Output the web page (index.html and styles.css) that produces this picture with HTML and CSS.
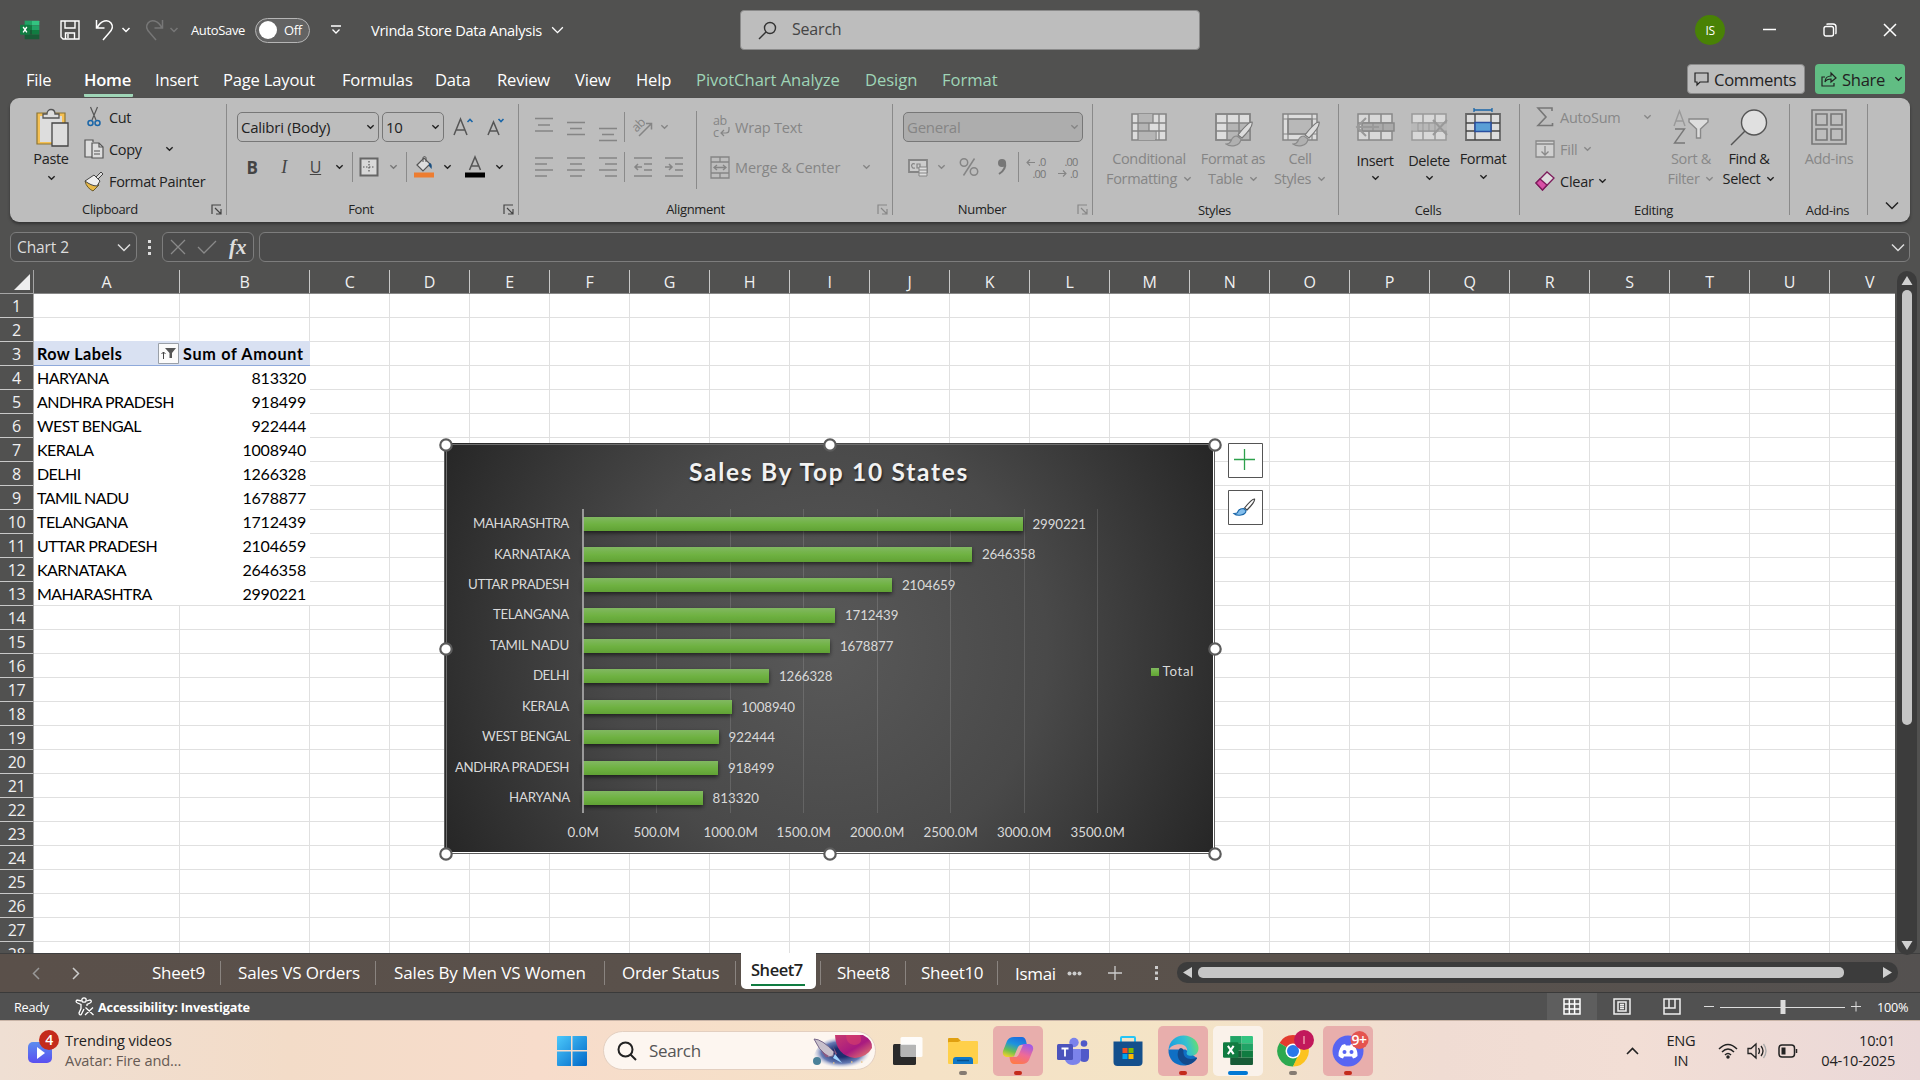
FILE: index.html
```html
<!DOCTYPE html>
<html lang="en">
<head>
<meta charset="utf-8">
<title>Vrinda Store Data Analysis</title>
<link rel="stylesheet" href="styles.css">
</head>
<body>
<svg class="defs" width="0" height="0" aria-hidden="true">
  <symbol id="chev" viewBox="0 0 10 6"><path d="M1.5 1l3.5 3.5L8.5 1" fill="none" stroke="currentColor" stroke-width="1.5"/></symbol>
  <symbol id="bigchev" viewBox="0 0 14 9"><path d="M1 1.5l6 6 6-6" fill="none" stroke="currentColor" stroke-width="1.5"/></symbol>
  <symbol id="launch" viewBox="0 0 11 11"><path d="M1 10V1h9M4 4l6 6M10 5v5H5" fill="none" stroke="currentColor" stroke-width="1.2"/></symbol>
  <symbol id="brush" viewBox="0 0 28 26"><path d="M27 1c-3 0-7 4-14 13l4 3C24 10 28 4 27 1z" fill="#ddd" stroke="#777" stroke-width="1.2"/><path d="M12 15c-3 0-5 2-6 5-1 2-3 3-5 3 4 3 14 3 15-5z" fill="#b0b0b0" stroke="#8a8a8a" stroke-width="1.2"/></symbol>
  <symbol id="excel" viewBox="0 0 30 30"><path d="M7 1h11v7H7z" fill="#21a366"/><path d="M18 1h10q1 0 1 1v6H18z" fill="#33c481"/><path d="M7 8h11v7H7z" fill="#107c41"/><path d="M18 8h11v7H18z" fill="#21a366"/><path d="M7 15h11v7H7z" fill="#185c37"/><path d="M18 15h11v7H18z" fill="#107c41"/><path d="M7 22h22v6q0 1-1 1H8q-1 0-1-1z" fill="#185c37"/><rect x="0" y="7" width="15" height="15" rx="1.2" fill="#107c41"/><path d="M4.700 10.500l5.600 8M10.300 10.500l-5.600 8" stroke="#fff" stroke-width="2"/></symbol>
</svg>

<header class="titlebar">
  <svg class="t-excel" width="20" height="20"><use href="#excel"/></svg>
  <svg width="20" height="20" viewBox="0 0 20 20" fill="none" stroke="#fff" stroke-width="1.4"><path d="M1 1h18v18H3l-2-2zM5 1v7h10V1M5.500 19v-6h9v6M8 14v4"/></svg>
  <svg width="20" height="22" viewBox="0 0 20 22" fill="none" stroke="#fff" stroke-width="1.5"><path d="M1.500 1v8h8M2 9C6 1 13 0 16 4s1 7-2 10l-6 7"/></svg>
  <svg class="chev w" width="10" height="6"><use href="#chev"/></svg>
  <svg width="20" height="22" viewBox="0 0 20 22" fill="none" stroke="#777" stroke-width="1.500"><path d="M18.500 1v8h-8M18 9C14 1 7 0 4 4s-1 7 2 10l6 7"/></svg>
  <svg class="chev g" width="10" height="6"><use href="#chev"/></svg>
  <span class="autosave">AutoSave</span>
  <span class="toggle"><i></i>Off</span>
  <svg width="10" height="10" viewBox="0 0 10 10" fill="none" stroke="#fff" stroke-width="1.300"><path d="M0 1h10M1.500 4.500L5 8l3.500-3.500"/></svg>
  <span class="doc">Vrinda Store Data Analysis</span>
  <svg class="w" width="13" height="8"><use href="#bigchev"/></svg>
  <div class="search"><svg width="19" height="19" viewBox="0 0 19 19" fill="none" stroke="#333" stroke-width="1.400"><circle cx="12" cy="7" r="5.500"/><path d="M8 11l-7 7"/></svg><span>Search</span></div>
  <div class="win">
    <span class="avatar">IS</span>
    <svg width="14" height="14" viewBox="0 0 14 14"><path d="M0 6.500h13" stroke="#fff" stroke-width="1.500"/></svg>
    <svg width="14" height="14" viewBox="0 0 14 14" fill="none" stroke="#fff" stroke-width="1.400"><rect x="1" y="3.500" width="9.500" height="9.500" rx="2"/><path d="M3.500 1.500Q4 1 5 1h5q3 0 3 3v5.500q0 1-.5 1.500"/></svg>
    <svg width="14" height="14" viewBox="0 0 14 14"><path d="M1 1l12 12M13 1L1 13" stroke="#fff" stroke-width="1.500"/></svg>
  </div>
</header>

<nav class="tabs">
  <span>File</span><span class="on"><b>Home</b></span><span>Insert</span><span>Page Layout</span><span>Formulas</span><span>Data</span><span>Review</span><span>View</span><span>Help</span><span class="ctx">PivotChart Analyze</span><span class="ctx">Design</span><span class="ctx">Format</span>
  <div class="btn comments"><svg width="15" height="14" viewBox="0 0 15 14" fill="none" stroke="#222" stroke-width="1.200"><path d="M1 1h13v9H6l-3 3v-3H1z"/></svg>Comments</div>
  <div class="btn share"><svg width="16" height="15" viewBox="0 0 16 15" fill="none" stroke="#222" stroke-width="1.200"><path d="M4 5H1v9h12v-3M4 10c0-4 3-6 6-6V1l5 5-5 4V7c-3 0-5 1-6 3z"/></svg>Share<svg class="k" width="9" height="6"><use href="#chev"/></svg></div>
</nav>

<section class="ribbon">
  <div class="grp clip">
    <div class="body">
      <div class="big paste"><svg width="36" height="40" viewBox="-2 0 36 40"><path d="M2 5h28v31H2z" fill="#f5c053" stroke="#8c7433" stroke-width="1.200"/><path d="M5 8h22v26H5z" fill="#ddd"/><path d="M8 10V6h4c0-6 8-6 8 0h4v4z" fill="#ddd" stroke="#555" stroke-width="1.300"/><path d="M17 15h16v23H17z" fill="#ddd" stroke="#444" stroke-width="1.300"/></svg><span>Paste</span><svg class="k" width="9" height="6"><use href="#chev"/></svg></div>
      <div class="list">
        <div class="row"><svg width="20" height="20" viewBox="0 0 20 20" fill="none" stroke="#555" stroke-width="1.200"><path d="M6.500 0L12 13M13.500 0L8 13"/><g stroke="#1a66a8" stroke-width="1.500"><circle cx="6.500" cy="16" r="2.500"/><circle cx="13.500" cy="16" r="2.500"/></g></svg><span>Cut</span></div>
        <div class="row"><svg width="20" height="20" viewBox="0 0 20 20" fill="#ddd" stroke="#555" stroke-width="1.200"><path d="M8 18H1V1h8v2"/><path d="M8 4h7l4 4v11H8z"/><path d="M15 4v4h4M10 12h6M10 15h6" fill="none"/></svg><span class="cp">Copy</span><svg class="k" width="9" height="6"><use href="#chev"/></svg></div>
        <div class="row"><svg width="20" height="19" viewBox="0 0 20 19"><path d="M1 9l6-2 8 6-6 6c-4-2-7-5-8-10z" fill="#e8b845" stroke="#6b5a2a"/><path d="M1 9l9-6 6 6-3 5c-4 0-8-2-12-5z" fill="#eee" stroke="#444"/><path d="M12 5l5-5 2 2-5 5z" fill="#ddd" stroke="#444"/></svg><span>Format Painter</span></div>
      </div>
    </div>
    <label>Clipboard</label><svg class="la" width="11" height="11"><use href="#launch"/></svg>
  </div>

  <div class="grp font">
    <div class="body col">
      <div class="r1"><div class="combo c1">Calibri (Body)<svg width="9" height="6"><use href="#chev"/></svg></div><div class="combo c2">10<svg width="9" height="6"><use href="#chev"/></svg></div>
        <svg class="m9" width="21" height="20" viewBox="0 0 21 20" fill="none"><path d="M1 18L7.500 2 14 18M3.500 13h8" stroke="#555" stroke-width="1.500"/><path d="M14.500 5L17 2.500l2.500 2.500" stroke="#1a66a8" stroke-width="1.600"/></svg>
        <svg class="m12" width="19" height="20" viewBox="0 0 19 20" fill="none"><path d="M1 18L6.500 5 12 18M3 14h7" stroke="#555" stroke-width="1.500"/><path d="M11.500 2l2.500 2.500L16.500 2" stroke="#1a66a8" stroke-width="1.600"/></svg></div>
      <div class="r2 fontrow"><b class="fb">B</b><i class="fi">I</i><u class="fu">U</u><svg class="k" width="9" height="6"><use href="#chev"/></svg><em></em>
        <svg width="20" height="20" viewBox="0 0 20 20"><path d="M1.500 1.500h17v17h-17z" fill="#d8d8d8" stroke="#666" stroke-width="2"/><path d="M10 4v12M4 10h12" stroke="#555" stroke-width="1.200" stroke-dasharray="1.500 1.500"/></svg>
        <svg class="gg" width="9" height="6"><use href="#chev"/></svg><em></em>
        <svg width="22" height="22" viewBox="0 0 22 22"><path d="M4 9l7-7 6 6-7 7z" fill="#ddd" stroke="#555" stroke-width="1.200"/><path d="M10 6V2c0-2 3-2 3 0v4" fill="none" stroke="#555"/><path d="M16 7c3 0 3 3 2.500 6L16 10z" fill="#1a4f80"/><path d="M1 16.500h20v5H1z" fill="#ed7d31"/></svg>
        <svg class="k" width="9" height="6"><use href="#chev"/></svg>
        <svg width="22" height="22" viewBox="0 0 22 22"><path d="M5.500 14L11 1l5.500 13M7.500 10h7" fill="none" stroke="#555" stroke-width="1.500"/><path d="M1 16.500h20v5H1z"/></svg>
        <svg class="k" width="9" height="6"><use href="#chev"/></svg></div>
    </div>
    <label>Font</label><svg class="la" width="11" height="11"><use href="#launch"/></svg>
  </div>

  <div class="grp align dis">
    <div class="body">
      <div class="aleft">
        <div class="arow"><svg width="18" height="20" viewBox="0 0 18 20"><path d="M0 1.500h18M3 8h12M0 14h18"/></svg><svg width="18" height="20" viewBox="0 0 18 20"><path d="M0 5.500h18M3 11.500h12M0 17.500h18"/></svg><svg width="18" height="20" viewBox="0 0 18 20"><path d="M0 11.500h18M3 17.500h12M0 23.500h18"/></svg><em></em>
          <svg width="22" height="22" viewBox="0 0 22 22"><g transform="rotate(-45 8 9)"><text x="0" y="12" class="ab">ab</text></g><path d="M7 20L19 8M14 7.500h5.500v6"/></svg><svg class="cv as0" width="9" height="6"><use href="#chev"/></svg></div>
        <div class="arow"><svg width="18" height="20" viewBox="0 0 18 20"><path d="M0 1h18M0 7h12M0 13h18M0 19h12"/></svg><svg width="18" height="20" viewBox="0 0 18 20"><path d="M0 1h18M3 7h12M0 13h18M3 19h12"/></svg><svg width="18" height="20" viewBox="0 0 18 20"><path d="M0 1h18M6 7h12M0 13h18M6 19h12"/></svg><em></em>
          <svg width="18" height="20" viewBox="0 0 18 20"><path d="M0 1h18M10 7h8M10 13h8M0 19h18M8 10H1M4 7l-3 3 3 3"/></svg><svg width="18" height="20" viewBox="0 0 18 20"><path d="M0 1h18M10 7h8M10 13h8M0 19h18M0 10h7M4 7l3 3-3 3"/></svg></div>
      </div>
      <div class="aright">
        <div class="row"><svg width="20" height="21" viewBox="0 0 20 21"><text class="ab"><tspan x="3" y="8">ab</tspan><tspan x="3" y="20">c</tspan></text><path d="M19 10v3q0 3-3 3h-5M14 13l-3 3 3 3" stroke-width="1.200"/></svg><span>Wrap Text</span></div>
        <div class="row"><svg width="20" height="21" viewBox="0 0 20 21"><path d="M1 0h18v21H1zM1 5h18M1 16h18M10 0v5M10 16v5M4 10.500h12M7 8l-3 2.500L7 13M13 8l3 2.500-3 2.500" stroke-width="1.300"/></svg><span class="mc">Merge &amp; Center</span><svg class="cv" width="9" height="6"><use href="#chev"/></svg></div>
      </div>
    </div>
    <label>Alignment</label><svg class="la" width="11" height="11"><use href="#launch"/></svg>
  </div>

  <div class="grp num dis">
    <div class="body col">
      <div class="r1"><div class="combo c3">General<svg width="9" height="6"><use href="#chev"/></svg></div></div>
      <div class="r2 numrow"><svg width="20" height="20" viewBox="0 0 20 20"><path d="M1 3h18v12H1z" fill="#ccc" stroke-width="1.800"/><path d="M7 7c-3-1-4 1-3 3s2 1 3 1M9 7h3v4H9z" stroke-width="1.200"/><path d="M11 10h8v9h-8z" fill="#ddd" stroke-width="1"/><path d="M11 13h8M11 16h8" stroke-width="1"/></svg><svg class="cv" width="9" height="6"><use href="#chev"/></svg>
        <svg width="20" height="20" viewBox="0 0 20 20"><circle cx="5" cy="5.500" r="3.700"/><circle cx="15" cy="14.500" r="3.700"/><path d="M15.500 1.500l-11 17"/></svg>
        <svg width="20" height="20" viewBox="0 0 20 20"><circle cx="10" cy="6" r="4" fill="#777" stroke="none"/><path d="M13 5c1 5-1 9-6 12" stroke="#777" stroke-width="2"/></svg><em></em>
        <svg width="20" height="21" viewBox="0 0 20 21"><text class="dd" text-anchor="end"><tspan x="19.500" y="9">.0</tspan><tspan x="19.500" y="21">.00</tspan></text><path d="M9 5.500H1M4 2.500l-3 3 3 3" stroke-width="1.100"/></svg>
        <svg width="20" height="21" viewBox="0 0 20 21"><text class="dd" text-anchor="end"><tspan x="19.500" y="9">.00</tspan><tspan x="19.500" y="21">.0</tspan></text><path d="M0 16.500h8M5 13.500l3 3-3 3" stroke-width="1.100"/></svg></div>
    </div>
    <label>Number</label><svg class="la" width="11" height="11"><use href="#launch"/></svg>
  </div>

  <div class="grp sty dis">
    <div class="body">
      <div class="big"><svg width="36" height="40" viewBox="0 0 36 40"><path d="M1 6h34v26H1z" fill="#ddd" stroke-width="1.600"/><path d="M7 6h15v9h-4v8h6v9H7z" fill="#b5b5b5" stroke-width="0"/><path d="M1 15h34M1 23h34M7 6v26M22 6v9M28 6v26M18 15v8M25 23v9" stroke-width="1.300"/></svg><span>Conditional</span><span>Formatting <svg class="cv" width="9" height="6"><use href="#chev"/></svg></span></div>
      <div class="big"><svg width="40" height="40" viewBox="-2 0 40 40"><path d="M1 6h34v26H1z" fill="#ddd"/><path d="M12 15h23v17H12z" fill="#b5b5b5" stroke="none"/><path d="M1 6h34v26H1zM1 15h34M1 23h34M12 6v26M24 6v26"/><use href="#brush" x="10" y="13" width="28" height="26"/></svg><span>Format as</span><span>Table <svg class="cv" width="9" height="6"><use href="#chev"/></svg></span></div>
      <div class="big"><svg width="40" height="40" viewBox="-2 0 40 40"><path d="M1 6h34v26H1z" fill="#ddd"/><path d="M6 11h24v15H6z" fill="#b8b8b8"/><path d="M1 11h34M1 26h34M6 6v26M30 6v26" stroke-width="1.200"/><use href="#brush" x="10" y="13" width="28" height="26"/></svg><span>Cell</span><span>Styles <svg class="cv" width="9" height="6"><use href="#chev"/></svg></span></div>
    </div>
    <label>Styles</label>
  </div>

  <div class="grp cells">
    <div class="body">
      <div class="big one"><svg width="40" height="40" viewBox="0 0 40 40" stroke="#888" fill="none"><path d="M3 6h34v26H3zM3 15h34M3 23h34M14 6v26M26 6v26" fill="#d8d8d8" stroke-width="1.500"/><path d="M7 15h32v8H7z" fill="#aaa" stroke-width="1.500"/><path d="M18 15v8M28 15v8"/><path d="M24 19H2M11 10l-9 9 9 9" stroke="#999" stroke-width="2"/></svg><span>Insert</span><svg class="k" width="9" height="6"><use href="#chev"/></svg></div>
      <div class="big one"><svg width="40" height="40" viewBox="-2 0 40 40" stroke="#999" fill="none"><path d="M1 6h34v26H1zM1 15h34M1 23h34M12 6v26M24 6v26" fill="#d8d8d8" stroke-width="1.500"/><path d="M0 15.500h36v7H0z" fill="#b8b8b8" stroke="none"/><path d="M7 15h17v8H7zM12 15v8M18 15v8" /><path d="M22 12l14 15M36 12L22 27" stroke-width="2"/></svg><span>Delete</span><svg class="k" width="9" height="6"><use href="#chev"/></svg></div>
      <div class="big two"><svg width="36" height="40" viewBox="0 0 36 40" stroke="#444" fill="none"><path d="M1 6h34v26H1z" fill="#ddd" stroke="#666" stroke-width="1.800"/><path d="M1 15h34M1 23h34M10 6v26M26 6v26" stroke-width="1.300"/><path d="M10 14.500h16v9H10z" fill="#5a9fd6" stroke="#2a4fa0" stroke-width="1.500"/><path d="M9 2h18M9 0v4M27 0v4" stroke="#1a66a8" stroke-width="1.300"/></svg><span>Format</span><svg class="k" width="9" height="6"><use href="#chev"/></svg></div>
    </div>
    <label>Cells</label>
  </div>

  <div class="grp edit">
    <div class="body">
      <div class="list">
        <div class="row gy"><svg width="20" height="20" viewBox="0 0 20 20" fill="none" stroke="#777" stroke-width="1.600"><path d="M17 4V1H3l8 9-8 8.500h14.500V16"/></svg><span class="as">AutoSum</span><svg width="9" height="6"><use href="#chev"/></svg></div>
        <div class="row gy"><svg width="20" height="20" viewBox="0 0 20 20" fill="#d0d0d0" stroke="#888" stroke-width="1.300"><path d="M1 2h18v16H1zM1 5h18"/><path d="M10 7v9M6.500 12.500L10 16l3.500-3.500" fill="none"/></svg><span class="fl">Fill</span><svg width="9" height="6"><use href="#chev"/></svg></div>
        <div class="row"><svg width="20" height="20" viewBox="0 0 20 20" stroke="#7d1c5c" stroke-width="1.300"><path d="M1 12L12 1l7 6L7.500 19z" fill="#ddd"/><path d="M1 12l4-4 7 6-4.500 5z" fill="#d94fa6"/></svg><span class="cl">Clear</span><svg class="k" width="9" height="6"><use href="#chev"/></svg></div>
      </div>
      <div class="big gy"><svg width="36" height="40" viewBox="0 0 36 40" fill="none" stroke="#999" stroke-width="1.400"><path d="M1 18L6.500 3 12 18M3 13h7"/><path d="M2 21h9.500L1.500 35H12" stroke="#777"/><path d="M16 11h19v3l-7.500 7v9h-4v-9L16 14z" fill="#ddd" stroke="#888"/></svg><span>Sort &amp;</span><span>Filter <svg width="9" height="6"><use href="#chev"/></svg></span></div>
      <div class="big"><svg width="38" height="40" viewBox="0 0 38 40" fill="#e0e0e0" stroke="#555" stroke-width="1.400"><circle cx="24" cy="14.500" r="12.500"/><path d="M15 23L1 37"/></svg><span>Find &amp;</span><span>Select <svg class="k" width="9" height="6"><use href="#chev"/></svg></span></div>
    </div>
    <label>Editing</label>
  </div>

  <div class="grp addin">
    <div class="body"><div class="big gy"><svg width="36" height="40" viewBox="0 0 36 40" fill="none" stroke="#777" stroke-width="1.600"><path d="M1 2h34v34H1zM5 6h11v11H5zM20 6h11v11H20zM5 21h11v11H5zM20 21h11v11H20z"/></svg><span>Add-ins</span></div></div>
    <label>Add-ins</label>
  </div>
  <div class="collapse"><svg class="k" width="14" height="9"><use href="#bigchev"/></svg></div>
</section>

<section class="fbar">
  <div class="fbox name">Chart 2<svg width="14" height="9"><use href="#bigchev"/></svg></div>
  <svg width="4" height="16" viewBox="0 0 4 16" fill="#ddd"><path d="M0 1h3v3H0zM0 7h3v3H0zM0 13h3v3H0z"/></svg>
  <div class="fbox fx"><svg width="16" height="16" viewBox="0 0 16 16"><path d="M1 1l14 14M15 1L1 15" stroke="#8a8a8a" stroke-width="1.300"/></svg><svg width="20" height="14" viewBox="0 0 20 14"><path d="M1 7l6 6L19 1" fill="none" stroke="#8a8a8a" stroke-width="1.300"/></svg><i>fx</i></div>
  <div class="fbox long"><svg width="14" height="9"><use href="#bigchev"/></svg></div>
</section>

<main class="sheet">
  <div class="corner"><svg width="16" height="16"><path d="M16 0v16H0z" fill="#eee"/></svg></div>
  <div class="cols"><span class="ca">A</span><span class="cb">B</span><span>C</span><span>D</span><span>E</span><span>F</span><span>G</span><span>H</span><span>I</span><span>J</span><span>K</span><span>L</span><span>M</span><span>N</span><span>O</span><span>P</span><span>Q</span><span>R</span><span>S</span><span>T</span><span>U</span><span>V</span></div>
  <div class="rows"><span>1</span><span>2</span><span>3</span><span>4</span><span>5</span><span>6</span><span>7</span><span>8</span><span>9</span><span>10</span><span>11</span><span>12</span><span>13</span><span>14</span><span>15</span><span>16</span><span>17</span><span>18</span><span>19</span><span>20</span><span>21</span><span>22</span><span>23</span><span>24</span><span>25</span><span>26</span><span>27</span><span>28</span></div>
  <div class="grid">
    <div class="pivot">
      <div class="ph"><b>Row Labels</b><svg width="21" height="21" viewBox="0 0 21 21"><path d="M.5.5h20v20H.5z" fill="#fbfbfb" stroke="#9aa0a8"/><path d="M5.500 16V9M3.500 11l2-2 2 2" fill="none" stroke="#444"/><path d="M7 5h11l-4 5v5h-2.500v-5z" fill="#555"/></svg><b>Sum of Amount</b></div>
      <div class="pr"><span>HARYANA</span><span>813320</span></div>
      <div class="pr"><span>ANDHRA PRADESH</span><span>918499</span></div>
      <div class="pr"><span>WEST BENGAL</span><span>922444</span></div>
      <div class="pr"><span>KERALA</span><span>1008940</span></div>
      <div class="pr"><span>DELHI</span><span>1266328</span></div>
      <div class="pr"><span>TAMIL NADU</span><span>1678877</span></div>
      <div class="pr"><span>TELANGANA</span><span>1712439</span></div>
      <div class="pr"><span>UTTAR PRADESH</span><span>2104659</span></div>
      <div class="pr"><span>KARNATAKA</span><span>2646358</span></div>
      <div class="pr"><span>MAHARASHTRA</span><span>2990221</span></div>
    </div>
    <svg class="chart" width="790" height="430" viewBox="436 435 790 430">
      <defs>
        <radialGradient id="bg" gradientUnits="userSpaceOnUse" cx="829" cy="648" r="435"><stop offset="0" stop-color="#595959"/><stop offset=".5" stop-color="#494949"/><stop offset="1" stop-color="#262626"/></radialGradient>
        <linearGradient id="bar" x1="0" y1="0" x2="0" y2="1"><stop offset="0" stop-color="#81b861"/><stop offset=".5" stop-color="#6fb242"/><stop offset="1" stop-color="#61a235"/></linearGradient>
        <filter id="sh" x="-5%" y="-50%" width="110%" height="250%"><feDropShadow dx="0" dy="2" stdDeviation="2" flood-color="#000" flood-opacity=".6"/></filter>
      </defs>
      <path d="M444.500 443.500h770v410h-770z" fill="#fff" stroke="#5c5c5c"/>
      <path d="M445 443h768v409H445z" fill="url(#bg)"/>
      <path d="M446.500 852V444.500H1213" fill="none" stroke="#6e6e6e"/>
      <path d="M656.500 509v304M730.500 509v304M803.500 509v304M877.500 509v304M950.500 509v304M1024.500 509v304M1097.500 509v304" stroke="#fff" stroke-opacity=".13"/>
      <g fill="url(#bar)" filter="url(#sh)">
        <rect x="583" y="517" width="440" height="14"/><rect x="583" y="547" width="389" height="15"/><rect x="583" y="578" width="309" height="14"/><rect x="583" y="608" width="252" height="15"/><rect x="583" y="639" width="247" height="14"/><rect x="583" y="669" width="186" height="14"/><rect x="583" y="700" width="149" height="14"/><rect x="583" y="730" width="136" height="14"/><rect x="583" y="761" width="135" height="14"/><rect x="583" y="791" width="120" height="14"/>
      </g>
      <path d="M583 509v304" stroke="#b0b0b0" stroke-opacity=".8" stroke-width="2"/>
      <text class="ct" x="689" y="481" textLength="278">Sales By Top 10 States</text>
      <g class="cl2">
        <text x="473" y="528" textLength="96">MAHARASHTRA</text><text x="494" y="559" textLength="76">KARNATAKA</text><text x="468" y="589" textLength="101">UTTAR PRADESH</text><text x="493" y="619" textLength="76">TELANGANA</text><text x="490" y="650" textLength="79">TAMIL NADU</text><text x="533" y="680" textLength="36">DELHI</text><text x="522" y="711" textLength="47">KERALA</text><text x="482" y="741" textLength="88">WEST BENGAL</text><text x="455" y="772" textLength="114">ANDHRA PRADESH</text><text x="509" y="802" textLength="61">HARYANA</text>
        <text x="1032.500" y="529" textLength="53">2990221</text><text x="982" y="559" textLength="53">2646358</text><text x="902" y="590" textLength="53">2104659</text><text x="845" y="620" textLength="53">1712439</text><text x="840" y="651" textLength="53">1678877</text><text x="779" y="681" textLength="53">1266328</text><text x="741.500" y="712" textLength="53">1008940</text><text x="728.500" y="742" textLength="46">922444</text><text x="728" y="773" textLength="46">918499</text><text x="712.500" y="803" textLength="46">813320</text>
        <text x="567.500" y="837" textLength="31">0.0M</text><text x="633.500" y="837" textLength="46">500.0M</text><text x="703.500" y="837" textLength="54">1000.0M</text><text x="776.500" y="837" textLength="54">1500.0M</text><text x="850" y="837" textLength="54">2000.0M</text><text x="923.500" y="837" textLength="54">2500.0M</text><text x="997" y="837" textLength="54">3000.0M</text><text x="1070.500" y="837" textLength="54">3500.0M</text>
        <text x="1162.500" y="676" textLength="30.500">Total</text>
      </g>
      <rect x="1151" y="668" width="8" height="8" fill="url(#bar)"/>
      <g fill="#fff" stroke="#5c5c5c" stroke-width="2.200"><circle cx="446" cy="445" r="5.700"/><circle cx="830" cy="445" r="5.700"/><circle cx="1215" cy="445" r="5.700"/><circle cx="446" cy="649" r="5.700"/><circle cx="1215" cy="649" r="5.700"/><circle cx="446" cy="854" r="5.700"/><circle cx="830" cy="854" r="5.700"/><circle cx="1215" cy="854" r="5.700"/></g>
    </svg>
    <div class="side">
      <svg width="35" height="35" viewBox="0 0 35 35"><path d="M.5.5h34v34H.5z" fill="#fff" stroke="#555"/><path d="M16.500 6v21M6 16.500h21" stroke="#2da14c" stroke-width="1.300"/></svg>
      <svg width="35" height="35" viewBox="0 0 35 35"><path d="M.5.5h34v34H.5z" fill="#fff" stroke="#555"/><path d="M26.500 9c-2 0-6 4-10 9l2.500 2c4-4 8-9 7.500-11z" fill="#fff" stroke="#444" stroke-width="1.200"/><path d="M15.500 18.500c-3 0-5 1-6 4-.5 1-2 1-3.500 1 3 3 12 2 12-3z" fill="#83beec" stroke="#1a66a8" stroke-width="1.200"/></svg>
    </div>
  </div>
  <div class="vscroll"><svg width="20" height="684" viewBox="0 0 20 684"><rect width="20" height="684" rx="10" fill="#3c3c3c"/><path d="M4.500 14l5.500-9 5.500 9zM4.500 670h11L10 679z" fill="#d0d0d0"/><rect x="5" y="19" width="10" height="435" rx="5" fill="#c6c6c6"/></svg></div>
</main>

<footer class="sheettabs">
  <svg class="n1" width="8" height="13" viewBox="0 0 8 13"><path d="M7 1L1.500 6.500 7 12" fill="none" stroke="#999" stroke-width="1.500"/></svg>
  <svg class="n2" width="8" height="13" viewBox="0 0 8 13"><path d="M1 1l5.500 5.500L1 12" fill="none" stroke="#ccc" stroke-width="1.500"/></svg>
  <span class="st s1">Sheet9</span><span class="st s2">Sales VS Orders</span><span class="st s3">Sales By Men VS Women</span><span class="st s4">Order Status</span>
  <span class="active"><b>Sheet7</b></span>
  <span class="st s5">Sheet8</span><span class="st s6">Sheet10</span><span class="s7">Ismai</span>
  <svg class="d1" width="15" height="5" viewBox="0 0 15 5" fill="#ccc"><circle cx="2.500" cy="2.500" r="2"/><circle cx="7.500" cy="2.500" r="2"/><circle cx="12.500" cy="2.500" r="2"/></svg>
  <svg class="d2" width="14" height="14" viewBox="0 0 14 14"><path d="M7 0v14M0 7h14" stroke="#ccc" stroke-width="1.300"/></svg>
  <svg class="d3" width="4" height="14" viewBox="0 0 4 14" fill="#ccc"><path d="M0 0h3v3H0zM0 5.500h3v3H0zM0 11h3v3H0z"/></svg>
  <svg class="hs" width="721" height="21" viewBox="0 0 721 21"><rect width="721" height="21" rx="10" fill="#3c3c3c"/><path d="M6 10.500L15 5v11zM715 10.500L706 5v11z" fill="#d0d0d0"/><rect x="21" y="5" width="646" height="11" rx="5" fill="#c6c6c6"/></svg>
</footer>

<section class="status">
  <span class="ready">Ready</span>
  <svg width="19" height="19" viewBox="0 0 19 19" fill="none" stroke="#fff" stroke-width="1.300"><circle cx="9" cy="3" r="2.200"/><path d="M6.500 4L2 3C.5 4 1 5.500 2.500 6L6 7.500v4L4 16c0 2 2 2.500 2.500 1L9 12M11.500 4L15 3c2 .5 1.500 2.500 0 3l-3 1.500V9M10.500 10.500l8 7.500M18 10.500L10 18"/></svg>
  <b>Accessibility: Investigate</b>
  <div class="views">
    <i class="v1"><svg width="18" height="17" viewBox="0 0 18 17" fill="none" stroke="#fff" stroke-width="1.500"><path d="M1 1h16v15H1zM1 6h16M1 11h16M6.300 1v15M11.600 1v15"/></svg></i>
    <i><svg width="18" height="17" viewBox="0 0 18 17" fill="none" stroke="#eee" stroke-width="1.500"><path d="M1 1h16v15H1zM5 4h8v9H5zM7 6.500h4M7 8.500h4M7 10.500h4"/></svg></i>
    <i><svg width="18" height="17" viewBox="0 0 18 17" fill="none" stroke="#eee" stroke-width="1.500"><path d="M1 1h16v15H1zM1 10h11V1M6 1v9"/></svg></i>
  </div>
  <svg width="157" height="16" viewBox="0 0 157 16" stroke="#ddd" fill="none"><path d="M0 7.500h10M16 8.500h125M147 7.500h10M152 2.500v10"/><path d="M79 1v14" stroke-width="5"/></svg>
  <span class="pct">100%</span>
</section>

<section class="taskbar">
  <div class="widget"><svg width="34" height="36" viewBox="0 0 34 36"><defs><linearGradient id="wv" x1="0" y1="0" x2="0" y2="1"><stop stop-color="#5b8def"/><stop offset="1" stop-color="#5a4ff0"/></linearGradient></defs><rect x="1" y="13" width="24" height="21" rx="5" fill="url(#wv)"/><path d="M10 18l8 6-8 6z" fill="#fff"/><circle cx="22" cy="11" r="10" fill="#c42b1c"/><text x="22" y="16" text-anchor="middle" class="bd">4</text></svg>
    <p><span>Trending videos</span><span class="sub">Avatar: Fire and...</span></p></div>
  <div class="apps">
    <svg class="start" width="30" height="30" viewBox="0 0 30 30"><defs><linearGradient id="w" x1="0" y1="0" x2="1" y2="1"><stop stop-color="#4cc9fb"/><stop offset="1" stop-color="#0067c8"/></linearGradient></defs><path d="M0 1q0-1 1-1h13v14H0zM15.500 0H29q1 0 1 1v13H15.500zM0 15.500h14V30H1q-1 0-1-1zM15.500 15.500H30V29q0 1-1 1H15.500z" fill="url(#w)"/></svg>
    <div class="tsearch"><svg width="20" height="20" viewBox="0 0 20 20" fill="none" stroke="#222" stroke-width="2"><circle cx="8.500" cy="8.500" r="7"/><path d="M13.500 13.500L19 19"/></svg><span>Search</span>
      <svg class="pic" width="64" height="34" viewBox="0 0 64 34"><defs><radialGradient id="sp"><stop offset=".3" stop-color="#1d2f6e"/><stop offset=".7" stop-color="#4a63a8" stop-opacity=".85"/><stop offset="1" stop-color="#c9cfe8" stop-opacity="0"/></radialGradient><linearGradient id="pl" x1="0" y1="0" x2="1" y2="1"><stop stop-color="#c83a70"/><stop offset=".55" stop-color="#a81a80"/><stop offset="1" stop-color="#f08a6a"/></linearGradient></defs><path d="M3 24Q8 6 26 3l34 8q2 16-8 23H10Q1 34 3 24z" fill="url(#sp)"/><path d="M25 1h28q10 5 9 13-5 9-17 10Q26 22 25 1z" fill="url(#pl)"/><path d="M36 1h14q4 9-6 10-8-1-8-10z" fill="#d8406a" opacity=".6"/><path d="M4 5q8 0 20 13l-1 4-5 1Q8 15 4 5z" fill="#c8c0cc" stroke="#77688a"/><path d="M11 17l8 5-3 1.500zM23 12l4 8-1.500 1z" fill="#8b5a82"/><path d="M25 20l7 9-9-5z" fill="#9fd5ff"/><circle cx="7" cy="27" r="4" fill="#4a8098"/><path d="M23 29h1.500M41 28h1.500M51 28h1.500" stroke="#e8c58a" stroke-width="1.500"/></svg></div>
    <i><svg width="30" height="28" viewBox="0 0 30 28"><rect x="0" y="7" width="23" height="21" rx="1.500" fill="#2a2a2a"/><rect x="7.500" y="0" width="22" height="20" rx="1.500" fill="#fff" opacity=".9"/><path d="M8 8h15v12H8z" fill="#b5b5b5"/></svg></i>
    <i class="run"><svg width="32" height="28" viewBox="0 0 32 28"><path d="M1 2q0-1 1-1h9l3 3v3L1 12z" fill="#e0a010"/><path d="M1 6q0-1 1-1h9l2-1h17q1 0 1 1v21q0 1-1 1H2q-1 0-1-1z" fill="#ffd04a"/><path d="M6 27v-4q0-3 3-3h14q3 0 3 3v4z" fill="#1078c8"/><path d="M10 23.500h12" stroke="#07508c" stroke-width="1.500"/></svg></i>
    <i class="hot"><svg width="32" height="30" viewBox="0 0 32 30"><defs><linearGradient id="cpa" x1=".6" y1="0" x2=".2" y2="1"><stop stop-color="#1b6fe0"/><stop offset=".35" stop-color="#1f93dd"/><stop offset=".7" stop-color="#6cc04f"/><stop offset="1" stop-color="#f2d02c"/></linearGradient><linearGradient id="cpb" x1=".7" y1="0" x2=".3" y2="1"><stop stop-color="#a05ae6"/><stop offset=".5" stop-color="#ee6a98"/><stop offset="1" stop-color="#ff7a48"/></linearGradient></defs><path d="M12 1h8q3 0 4 4l1 4h-4q-4 0-5 4l-2 5q-1 3-5 3H4q-4-1-3-6L5 5q2-4 7-4z" fill="url(#cpa)"/><path d="M20 28h-8q-3 0-4-4l-.5-3H11q3-1 4-4l3-7q1-2 4-2h5q5 1 4 6l-4 10q-2 4-7 4z" fill="url(#cpb)"/><path d="M13 18l3-7q1-2 3-2h2l-4 9q-1 3-3 3h-2z" fill="#e8aeac"/></svg></i>
    <i><svg width="32" height="28" viewBox="0 0 32 28"><circle cx="17" cy="5.500" r="4.700" fill="#7b83eb"/><circle cx="27" cy="6.500" r="3.300" fill="#5059c9"/><path d="M24 12h7q1 0 1 1v7q0 5-5 5-3 0-4-2z" fill="#5059c9"/><path d="M8 12h15q1 0 1 1v8q0 7-8 7-6 0-8-5z" fill="#7b83eb"/><rect y="7" width="16" height="16" rx="1.500" fill="#4b53bc"/><path d="M4.500 11.500h7M8 11.500v8" stroke="#fff" stroke-width="1.800"/></svg></i>
    <i><svg width="30" height="30" viewBox="0 0 30 30"><path d="M8 7V2q0-1 1-1h12q1 0 1 1v5" fill="none" stroke="#27c5f5" stroke-width="2"/><path d="M.5 5.500h29V26q0 4-4 4h-21q-4 0-4-4z" fill="#14508c"/><path d="M9.500 12h5v5h-5z" fill="#f25022"/><path d="M15.500 12h5v5h-5z" fill="#7fba00"/><path d="M9.500 18h5v5h-5z" fill="#00a4ef"/><path d="M15.500 18h5v5h-5z" fill="#ffb900"/></svg></i>
    <i class="hot"><svg width="31" height="31" viewBox="0 0 32 32"><defs><linearGradient id="e1" x1="0" y1=".5" x2="1" y2=".3"><stop stop-color="#1b9de2"/><stop offset=".6" stop-color="#35c1d0"/><stop offset="1" stop-color="#6be06a"/></linearGradient></defs><path d="M.5 15C0 25 7 31.500 16 31.500c6 0 11-3 14-7.500l-12-9z" fill="#0f6fc4"/><path d="M.5 16C1 6 8 .5 16 .5c10 0 15.500 7 15.500 13 0 5-3 8-7.500 8-4 0-5.500-2-4.500-4s0-8-7.500-8C6 9.500 2 12 .5 16z" fill="url(#e1)"/><path d="M12 14c-5 7 0 16 8 17 5-1 8-4 10-7 0-1-1-1-2 0-6 2-13 0-12-8-1-3-3-3-4-2z" fill="#12498c"/></svg></i>
    <i class="cur"><svg width="31" height="31"><use href="#excel"/></svg></i>
    <i class="run"><svg width="42" height="40" viewBox="-5 -4 42 40"><path d="M16 16L2.500 8a15.500 15.500 0 0 1 27 0z" fill="#e33b2e"/><path d="M2.500 8A15.500 15.500 0 0 0 16 31.500L22.500 20 16 16z" fill="#2da94f"/><path d="M29.500 8A15.500 15.500 0 0 1 16 31.500L23 16l-1-8z" fill="#fcc31e"/><circle cx="16" cy="16" r="7.500" fill="#fff"/><circle cx="16" cy="16" r="6" fill="#2a78ea"/><circle cx="27" cy="5" r="10" fill="#c2185b"/><path d="M27 1v8" stroke="#e9a" stroke-width="1.500"/></svg></i>
    <i class="hot"><svg width="42" height="40" viewBox="-5 -4 42 40"><circle cx="16" cy="16" r="15.500" fill="#5865f2"/><path d="M10 10l3-1 1 1.500h4L19 9l3 1q4 6 3.500 11-2 2-4.500 2.500L20 21.500h-8l-1 2Q8.500 23 6.500 21 6 16 10 10z" fill="#fff"/><circle cx="12.500" cy="17" r="2" fill="#5865f2"/><circle cx="19.500" cy="17" r="2" fill="#5865f2"/><circle cx="27.500" cy="5" r="9" fill="#e5534f"/><text x="27" y="10" text-anchor="middle" class="bd">9+</text></svg></i>
  </div>
  <div class="tray">
    <svg width="13" height="8" viewBox="0 0 13 8"><path d="M1 7l5.500-5.500L12 7" fill="none" stroke="#222" stroke-width="1.600"/></svg>
    <p class="lang"><span>ENG</span><span>IN</span></p>
    <svg class="wifi" width="20" height="16" viewBox="0 0 20 16" fill="none" stroke="#222" stroke-width="1.500"><path d="M1 6q9-9 18 0M4 9q6-6 12 0M7 12q3-3 6 0"/><circle cx="10" cy="14" r="1" fill="#222"/></svg>
    <svg class="snd" width="20" height="16" viewBox="0 0 20 16" fill="none" stroke="#222" stroke-width="1.300"><path d="M1 5.500h3L9 1v14l-5-4.500H1zM11.500 5q2 3 0 6M14 3q4 5 0 10"/><path d="M16.500 1q5 7 0 14" stroke="#aaa"/></svg>
    <svg class="bat" width="20" height="14" viewBox="0 0 20 14" fill="none" stroke="#222" stroke-width="1.500"><rect x="1" y="1" width="15.500" height="12" rx="3"/><path d="M18.500 5v4"/><path d="M3.500 3.500h4v7h-4z" fill="#222" stroke="none"/></svg>
    <p class="clock"><span>10:01</span><span>04-10-2025</span></p>
  </div>
</section>
</body>
</html>
```
FILE: styles.css
```css
* { box-sizing: border-box; }
body { margin: 0; width: 1920px; height: 1080px; overflow: hidden; background: #515150; font-family: "Open Sans", "Noto Sans", sans-serif; font-size: 15px; letter-spacing: -.35px; color: #222; white-space: nowrap; }
svg { display: block; flex: none; overflow: visible; }
.defs { position: absolute; }
p { margin: 0; }

.titlebar { height: 60px; display: flex; align-items: center; padding-left: 20px; color: #fff; }
.titlebar > * { flex: none; }
.titlebar > svg:nth-child(2) { margin-left: 20px; }
.titlebar > svg:nth-child(3) { margin-left: 15px; }
.titlebar > svg:nth-child(4) { margin-left: 6px; }
.titlebar > svg:nth-child(5) { margin-left: 13px; color: #777; }
.titlebar > svg:nth-child(6) { margin-left: 5px; color: #777; }
.w { color: #fff; }
.k { color: #222; }
.autosave { margin-left: 12px; width: 64px; font-size: 13px; letter-spacing: -.35px; }
.toggle { width: 55px; height: 25px; border: 1px solid #b5b5b5; border-radius: 13px; background: #636363; display: flex; align-items: center; gap: 7px; padding-left: 3px; font-size: 13px; }
.toggle i { width: 18px; height: 18px; border-radius: 9px; background: #fff; }
.titlebar > .toggle + svg { margin-left: 21px; }
.doc { margin-left: 30px; width: 180px; font-size: 14.6px; letter-spacing: -.3px; }
.search { margin-left: 176px; width: 460px; height: 40px; border: 1px solid #8a8a8a; border-radius: 4px; background: #bdbdbd; color: #444; font-size: 16px; display: flex; align-items: center; padding-left: 17px; gap: 15px; letter-spacing: -.2px; }
.search span { margin-top: -2px; }
.win { display: flex; align-items: center; margin-left: 495px; }
.avatar { width: 30px; height: 30px; border-radius: 50%; background: #498205; font-size: 12px; display: flex; align-items: center; justify-content: center; margin-right: 38px; }
.win svg { margin-right: 46px; }

.tabs { height: 38px; display: grid; grid-template-columns: 58px 71px 68px 119px 93px 62px 78px 61px 60px 169px 77px 745px 128px 90px; padding-left: 26px; color: #fff; font-size: 16.6px; letter-spacing: -.2px; align-items: center; }
.tabs > span { line-height: 30px; padding-top: 2px; }
.tabs .on b { display: inline-block; font-weight: 600; letter-spacing: -.25px; line-height: 28px; border-bottom: 3px solid #9fd5b7; margin-bottom: -3px; width: 49px; border-radius: 1px; }
.tabs .ctx { color: #9fd5b7; letter-spacing: -.05px; }
.btn { height: 30px; border-radius: 4px; color: #222; display: flex; align-items: center; gap: 5px; padding-left: 6px; letter-spacing: -.3px; }
.comments { width: 118px; background: #bdbdbd; border: 1px solid #8a8a8a; }
.share { width: 90px; background: #61bd83; }
.share .k { margin-left: 4px; }

.ribbon { height: 124px; margin: 0 10px; border-radius: 9px; background: #bdbdbd; box-shadow: 0 2px 3px #333; display: flex; font-size: 14.5px; }
.grp { position: relative; height: 124px; padding-top: 6px; display: flex; flex-direction: column; }
.grp::after { content: ""; position: absolute; right: 0; top: 6px; width: 1px; height: 111px; background: #8a8a8a; }
.body { height: 96px; display: flex; }
.grp label { text-align: center; font-size: 13px; line-height: 18px; letter-spacing: -.35px; }
.la { position: absolute; right: 5px; bottom: 7px; color: #444; }
.clip { width: 217px; } .font { width: 292px; } .align { width: 374px; } .num { width: 200px; } .sty { width: 246px; } .cells { width: 181px; } .edit { width: 270px; } .addin { width: 78px; }
.clip label { padding-right: 17px; } .font label { padding-right: 24px; } .align label { padding-right: 21px; } .num label { padding-right: 22px; }
.dis { color: #858585; } .dis label { color: #222; } .gy { color: #888; } .dis .la { color: #888; }
.dis svg { fill: none; stroke: #858585; stroke-width: 1.5; }
.dis .cv, .dis .combo svg, .la { stroke-width: 0; }
.dis svg .ab { font-size: 12.5px; fill: #858585; stroke: none; letter-spacing: -.4px; }
.dis svg .dd { font-size: 11px; fill: #777; stroke: none; letter-spacing: -.8px; }
.big { display: flex; flex-direction: column; align-items: center; padding-top: 3px; line-height: 20px; }
.big > span { display: flex; align-items: center; gap: 6px; height: 20px; }
.big > svg:first-child { height: 40px; margin-bottom: 1px; margin-top: 1px; }
.paste { width: 54px; margin-left: 14px; }
.paste > svg + span { margin-bottom: 6px; }
.list { display: flex; flex-direction: column; }
.row { height: 32px; display: flex; align-items: center; }
.clip .list { margin-left: 6px; margin-top: -3px; }
.clip .row span { margin-left: 5px; }
.clip .row .cp { width: 56px; }
.col { flex-direction: column; }
.r1 { display: flex; margin: 8px 0 0 10px; align-items: center; height: 30px; }
.combo { height: 30px; border: 1px solid #777; border-radius: 5px; display: flex; align-items: center; justify-content: space-between; padding: 0 3px; font-size: 15px; letter-spacing: -.25px; }
.c1 { width: 142px; margin-right: 3px; } .c2 { width: 62px; } .c3 { width: 180px; background: #adadad; }
.m9 { margin-left: 9px; } .m12 { margin-left: 13px; }
.r2 { display: grid; align-items: center; justify-items: center; height: 30px; margin-top: 10px; }
.fontrow { margin-left: 9px; grid-template-columns: 32px 32px 31px 16px 10px 24px 24px 3px 32px 15px 40px 8px; }
.r2 em, .arow em { width: 1px; height: 30px; background: #8a8a8a; }
.fb { font-size: 17px; color: #444; } .fi { font: italic 18px "Liberation Serif", serif; color: #444; } .fu { font-size: 16px; color: #444; }
.gg { color: #777; }
.aleft { width: 178px; height: 78px; margin-top: 7px; border-right: 1px solid #8a8a8a; }
.arow { display: grid; grid-template-columns: 32px 32px 32px 1px 35px 28px; align-items: center; justify-items: center; height: 30px; padding-left: 9px; margin-top: 1px; }
.arow + .arow { margin-top: 10px; }
.as0 { justify-self: start; }
.aright { padding: 7px 0 0 13px; }
.aright .row + .row { margin-top: 8px; }
.aright span { margin-left: 5px; letter-spacing: -.2px; } .aright .mc { width: 127px; letter-spacing: -.1px; }
.numrow { margin-left: 10px; grid-template-columns: 30px 16px 40px 25px 8px 28px 35px; }
.sty .body { padding-left: 12px; }
.sty .big:nth-child(1) { width: 88px; } .sty .big:nth-child(2) { width: 80px; } .sty .big:nth-child(3) { width: 54px; }
.cells .big { width: 54px; } .cells .body { padding-left: 9px; }
.one > span { margin-top: 2px; margin-bottom: 4px; } .two > span { margin-bottom: 5px; }
.edit .list { width: 135px; margin: -3px 0 0 15px; }
.edit .row span { margin-left: 5px; letter-spacing: -.25px; } .as { width: 83px; } .fl { width: 23px; } .cl { width: 34px; margin-right: 4px; }
.edit .big { width: 60px; margin-left: -9px; } .edit .big + .big { margin-left: -2px; }
.sty label, .cells label, .edit label, .addin label { padding: 1px 3px 0 0; }
.addin .body { justify-content: center; }
.collapse { align-self: flex-end; margin: 0 0 12px 17px; }

.fbar { height: 48px; padding: 10px 10px 8px; display: flex; align-items: center; color: #ddd; font-size: 15.5px; letter-spacing: -.1px; }
.fbox { height: 30px; border: 1px solid #7d7d7d; border-radius: 6px; background: #4b4b4b; display: flex; align-items: center; }
.name { width: 127px; justify-content: space-between; padding: 0 5px 0 6px; margin-right: 11px; }
.fx { width: 92px; margin: 0 5px 0 10px; padding-left: 7px; gap: 11px; }
.fx i { font: italic 600 21px "Liberation Serif", serif; padding-left: 1px; }
.long { flex: 1; justify-content: flex-end; padding-right: 4px; }

.sheet { height: 683px; display: grid; grid-template: 24px 659px / 34px 1861px 25px; }
.corner { padding: 4px 0 0 14px; border-right: 1px solid #a5a5a5; border-bottom: 1px solid #a5a5a5; }
.cols { display: flex; overflow: hidden; color: #f0f0f0; font-size: 16px; border-bottom: 1px solid #888; }
.cols span { flex: 0 0 80px; text-align: center; line-height: 24px; border-right: 1px solid #c8c8c8; }
.cols .ca { flex-basis: 146px; } .cols .cb { flex-basis: 130px; }
.rows { grid-column: 1; grid-row: 2; overflow: hidden; color: #f0f0f0; font-size: 16px; border-right: 1px solid #a5a5a5; }
.rows span { display: block; height: 24px; line-height: 24px; text-align: center; border-bottom: 1px solid #c8c8c8; }
.grid { position: relative; overflow: hidden; padding-top: 47px; background: linear-gradient(#e0e0e0, #e0e0e0) 145px 0 / 1px 100% no-repeat, repeating-linear-gradient(90deg, transparent 0 79px, #e0e0e0 79px 80px) 196px 0 / 1700px 100% no-repeat, repeating-linear-gradient(transparent 0 23px, #e0e0e0 23px 24px), #fff; }
.pivot { width: 276px; color: #000; font-family: Lato, sans-serif; font-size: 16px; letter-spacing: -.2px; }
.ph { height: 25px; background: #d9e1f2; border-bottom: 1px solid #8ea9db; display: flex; align-items: center; padding-left: 3px; letter-spacing: .4px; font-size: 16.2px; }
.ph b:first-child { width: 121px; } .ph b:last-child { margin-left: 4px; letter-spacing: .7px; }
.pr { height: 24px; background: #fff; display: flex; justify-content: space-between; align-items: center; padding: 0 4px 2px 3px; }
.pr span:first-child { letter-spacing: -.55px; }
.pr:last-child { height: 23px; padding-bottom: 1px; }
.chart { position: absolute; left: 402px; top: 141px; }
.side { position: absolute; left: 1194px; top: 149px; display: flex; flex-direction: column; gap: 12px; }
.ct { font: bold 24.5px Lato, sans-serif; fill: #f2f2f2; text-shadow: 1px 2px 2px #222; }
.cl2 { font: 13.3px Lato, sans-serif; fill: #d9d9d9; }
.vscroll { grid-column: 3; grid-row: 1 / 3; padding: 1px 0 0 2px; }

.sheettabs { height: 40px; border-top: 1px solid #3f3f3f; border-bottom: 1px solid #3a3a3a; background: linear-gradient(90deg, #5a504a, #5a524c 70%, #545150); display: flex; align-items: center; color: #fff; font-size: 17px; letter-spacing: -.3px; }
.n1 { margin-left: 32px; } .n2 { margin-left: 32px; }
.st { line-height: 24px; border-right: 1px solid #8a8480; height: 24px; flex: none; }
.s1 { margin-left: 72px; width: 69px; } .s2 { padding-left: 17px; width: 155px; letter-spacing: -.15px; } .s3 { padding-left: 18px; width: 229px; letter-spacing: -.12px; } .s4 { padding-left: 17px; width: 131px; }
.active { align-self: flex-start; margin: -1px 4px 0 5px; width: 75px; height: 36px; background: #fff; border-radius: 0 0 5px 5px; padding: 3px 0 0 10px; color: #222; }
.active b { display: block; width: 54px; line-height: 27px; height: 30px; border-bottom: 2px solid #107c41; font-weight: 600; font-size: 16.5px; letter-spacing: -.45px; }
.s5 { border-left: 1px solid #8a8480; padding-left: 16px; width: 86px; } .s6 { padding-left: 15px; width: 92px; } .s7 { margin-left: 17px; width: 52px; }
.d2 { margin-left: 26px; } .d3 { margin-left: 33px; } .hs { margin-left: 18px; margin-top: -2px; }

.status { height: 27px; background: #515151; display: flex; align-items: center; color: #fff; font-size: 12.7px; letter-spacing: -.25px; padding-left: 14px; }
.ready { width: 61px; }
.status b { margin-left: 4px; font-size: 12.7px; letter-spacing: -.15px; width: 1449px; }
.views { display: flex; }
.views i { width: 50px; height: 27px; display: flex; align-items: center; justify-content: center; }
.views .v1 { background: #5e5e5e; }
.status > svg:last-of-type { margin-left: 7px; }
.pct { margin-left: 16px; }

.taskbar { height: 60px; display: flex; align-items: center; border-top: 1px solid #c9b5a8; background: linear-gradient(90deg, #efdfd3, #f3dcc8 15%, #f7dccb 28%, #f5e2c6 48%, #f4e4c6 62%, #f0dcd3 75%, #f2ded5 85%, #ead8d8); }
.bd { font: 600 14px "Open Sans", sans-serif; fill: #fff; letter-spacing: -.5px; }
.widget { width: 530px; display: flex; padding-left: 27px; }
.widget p { margin: -2px 0 0 4px; display: flex; flex-direction: column; line-height: 20px; font-size: 14.6px; letter-spacing: -.1px; }
.widget svg { margin-top: -3px; }
.sub { color: #665a54; }
.apps { display: flex; align-items: center; }
.start { margin-left: 27px; }
.tsearch { width: 273px; height: 39px; margin-left: 16px; margin-right: 4px; border-radius: 20px; border: 1px solid #e3cfc0; background: #fdf6f0; display: flex; align-items: center; padding-left: 13px; font-size: 17px; color: #555; }
.tsearch span { margin-left: 12px; width: 161px; }
.apps > i { width: 50px; height: 50px; margin-right: 5px; display: flex; align-items: center; justify-content: center; border-radius: 5px; position: relative; }
.apps > .tsearch + i { margin-left: 3px; }
.hot { background: #e8aeac; }
.apps > .cur { background: #faf2ea; }
.run::after, .hot::after, .cur::after { content: ""; position: absolute; bottom: 1px; left: 21px; width: 8px; height: 4px; border-radius: 2px; background: #857b72; }
.hot::after { background: #c42b1c; }
.cur::after { background: #0078d4; width: 20px; left: 15px; }
.tray { margin-left: auto; display: flex; align-items: center; padding-right: 25px; font-size: 14.6px; letter-spacing: -.25px; }
.tray p { display: flex; flex-direction: column; line-height: 20px; margin-top: -2px; }
.tray .lang { margin-left: 28px; width: 28px; align-items: center; }
.wifi { margin-left: 23px; } .snd { margin-left: 9px; } .bat { margin-left: 11px; }
.tray .clock { margin-left: 20px; width: 77px; align-items: flex-end; }
```
